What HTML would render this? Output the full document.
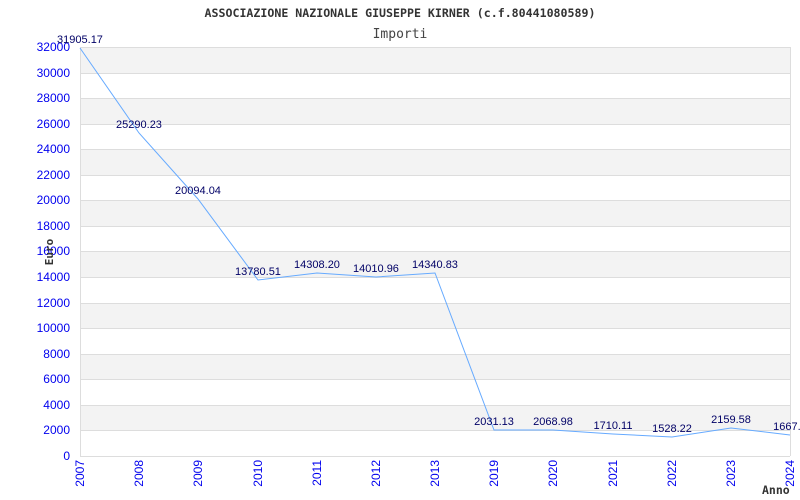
<!DOCTYPE html><html><head><style>body{margin:0;background:#fff}svg{display:block}</style></head><body>
<svg width="800" height="500" xmlns="http://www.w3.org/2000/svg">
<rect width="800" height="500" fill="#fff"/>
<text x="400" y="17" text-anchor="middle" font-family="DejaVu Sans Mono, Liberation Mono, monospace" font-size="11.6" font-weight="bold" fill="#333">ASSOCIAZIONE NAZIONALE GIUSEPPE KIRNER (c.f.80441080589)</text>
<text x="400" y="38" text-anchor="middle" font-family="DejaVu Sans Mono, Liberation Mono, monospace" font-size="13" fill="#444">Importi</text>
<g fill="#f3f3f3">
<rect x="80" y="47" width="710" height="26"/><rect x="80" y="98" width="710" height="26"/><rect x="80" y="149" width="710" height="26"/><rect x="80" y="200" width="710" height="26"/><rect x="80" y="251" width="710" height="26"/><rect x="80" y="303" width="710" height="25"/><rect x="80" y="354" width="710" height="25"/><rect x="80" y="405" width="710" height="25"/>
</g>
<g stroke="#ddd" stroke-width="1">
<line x1="80" x2="790" y1="47.5" y2="47.5"/><line x1="80" x2="790" y1="73.5" y2="73.5"/><line x1="80" x2="790" y1="98.5" y2="98.5"/><line x1="80" x2="790" y1="124.5" y2="124.5"/><line x1="80" x2="790" y1="149.5" y2="149.5"/><line x1="80" x2="790" y1="175.5" y2="175.5"/><line x1="80" x2="790" y1="200.5" y2="200.5"/><line x1="80" x2="790" y1="226.5" y2="226.5"/><line x1="80" x2="790" y1="251.5" y2="251.5"/><line x1="80" x2="790" y1="277.5" y2="277.5"/><line x1="80" x2="790" y1="303.5" y2="303.5"/><line x1="80" x2="790" y1="328.5" y2="328.5"/><line x1="80" x2="790" y1="354.5" y2="354.5"/><line x1="80" x2="790" y1="379.5" y2="379.5"/><line x1="80" x2="790" y1="405.5" y2="405.5"/><line x1="80" x2="790" y1="430.5" y2="430.5"/><line x1="80" x2="790" y1="456.5" y2="456.5"/>
<line x1="80.5" x2="80.5" y1="47" y2="456"/><line x1="790.5" x2="790.5" y1="47" y2="456"/>
</g>
<g font-family="Liberation Sans, sans-serif" font-size="12" fill="#0000ee" text-anchor="end">
<text x="70" y="51">32000</text><text x="70" y="77">30000</text><text x="70" y="102">28000</text><text x="70" y="128">26000</text><text x="70" y="153">24000</text><text x="70" y="179">22000</text><text x="70" y="204">20000</text><text x="70" y="230">18000</text><text x="70" y="255">16000</text><text x="70" y="281">14000</text><text x="70" y="307">12000</text><text x="70" y="332">10000</text><text x="70" y="358">8000</text><text x="70" y="383">6000</text><text x="70" y="409">4000</text><text x="70" y="434">2000</text><text x="70" y="460">0</text>
</g>
<text transform="translate(53,252) rotate(-90)" text-anchor="middle" font-family="DejaVu Sans Mono, monospace" font-size="11" font-weight="bold" fill="#333">Euro</text>
<text x="762" y="494" font-family="DejaVu Sans Mono, monospace" font-size="11.5" font-weight="bold" fill="#333">Anno</text>
<g font-family="Liberation Sans, sans-serif" font-size="12" fill="#0000ee" text-anchor="end">
<text transform="translate(84,460) rotate(-90)">2007</text><text transform="translate(143,460) rotate(-90)">2008</text><text transform="translate(202,460) rotate(-90)">2009</text><text transform="translate(262,460) rotate(-90)">2010</text><text transform="translate(321,460) rotate(-90)">2011</text><text transform="translate(380,460) rotate(-90)">2012</text><text transform="translate(439,460) rotate(-90)">2013</text><text transform="translate(498,460) rotate(-90)">2019</text><text transform="translate(557,460) rotate(-90)">2020</text><text transform="translate(617,460) rotate(-90)">2021</text><text transform="translate(676,460) rotate(-90)">2022</text><text transform="translate(735,460) rotate(-90)">2023</text><text transform="translate(794,460) rotate(-90)">2024</text>
</g>
<polyline fill="none" stroke="#66aaff" stroke-width="1" points="80,48 139,133 198,199 258,280 317,273 376,277 435,273 494,430 553,430 613,434 672,437 731,428 790,435"/>
<g font-family="Liberation Sans, sans-serif" font-size="11" fill="#000066" text-anchor="middle">
<text x="80" y="43">31905.17</text><text x="139" y="128">25290.23</text><text x="198" y="194">20094.04</text><text x="258" y="275">13780.51</text><text x="317" y="268">14308.20</text><text x="376" y="272">14010.96</text><text x="435" y="268">14340.83</text><text x="494" y="425">2031.13</text><text x="553" y="425">2068.98</text><text x="613" y="429">1710.11</text><text x="672" y="432">1528.22</text><text x="731" y="423">2159.58</text><text x="790" y="430">1667.2</text>
</g>
</svg>
</body></html>
